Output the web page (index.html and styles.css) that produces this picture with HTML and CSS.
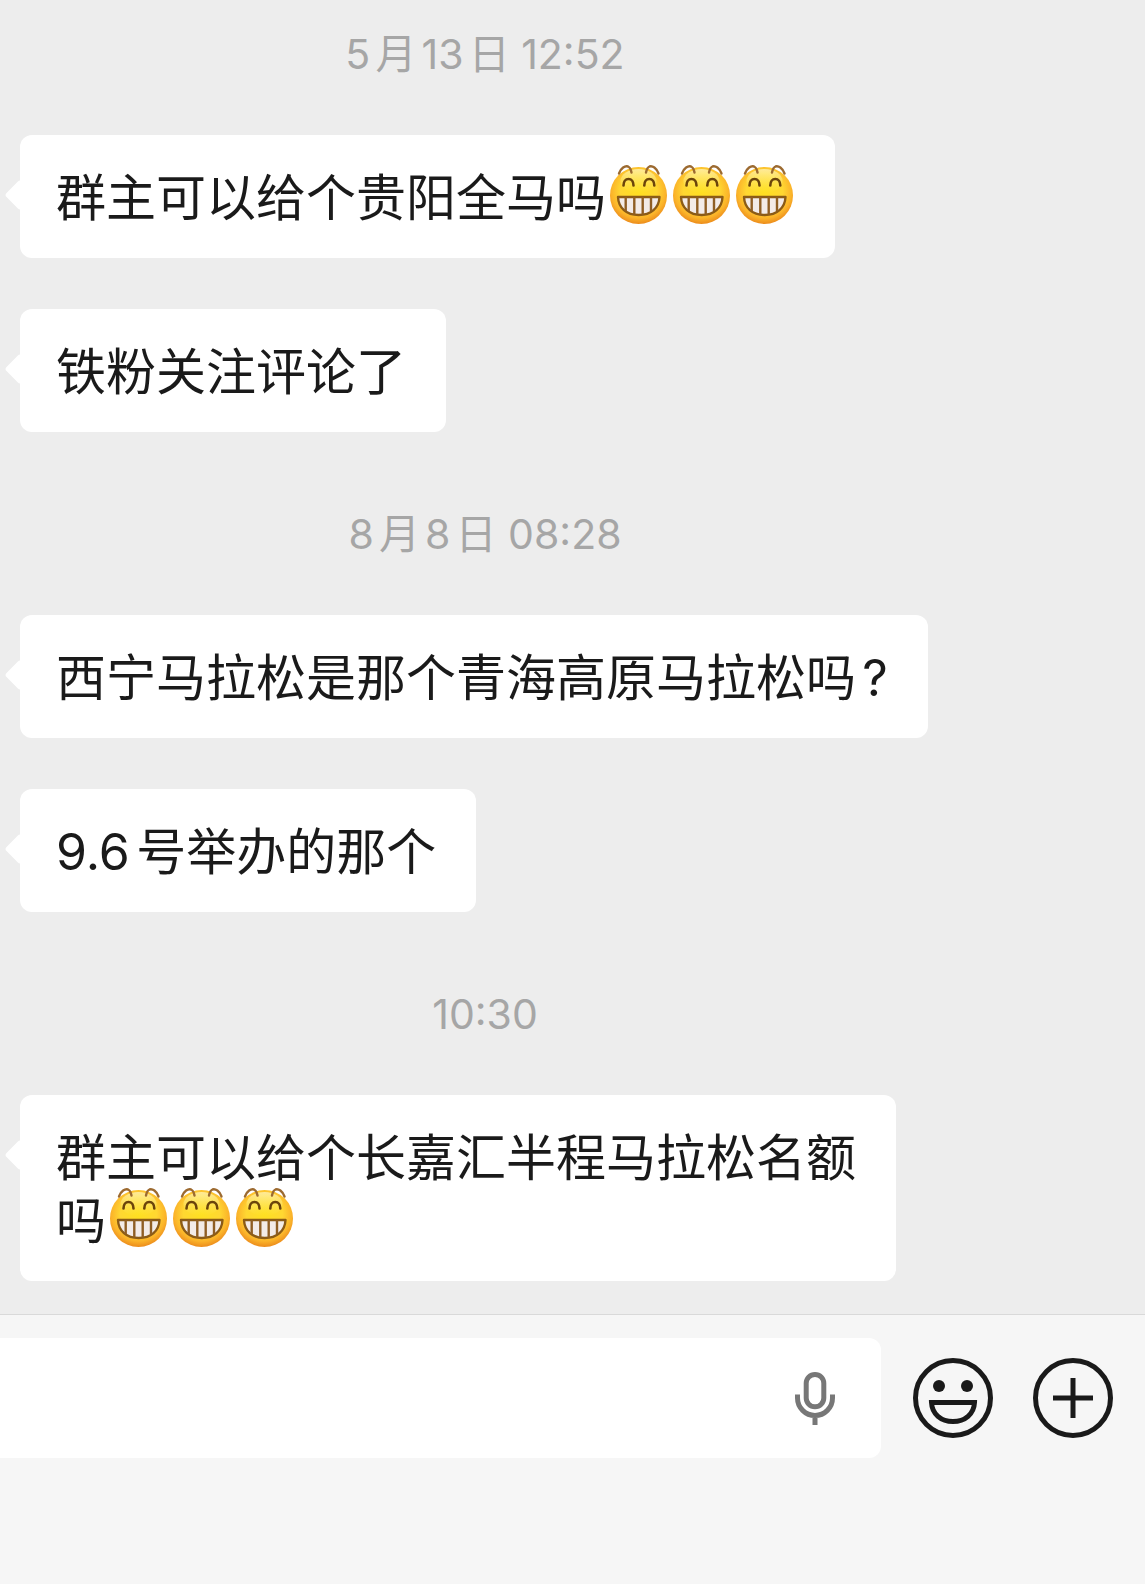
FILE: index.html
```html
<!DOCTYPE html>
<html lang="zh-CN">
<head>
  <meta charset="UTF-8" />
  <meta name="viewport" content="width=device-width, initial-scale=1.0"/>
  <title>聊天</title>
  <link rel="stylesheet" href="styles.css">
</head>
<body>

  <!-- Shared grin sticker -->
  <svg class="defs" aria-hidden="true">
    <defs>
      <radialGradient id="face" cx="50%" cy="42%" r="58%">
        <stop offset="0" stop-color="#ffe020" />
        <stop offset="0.55" stop-color="#ffd732" />
        <stop offset="0.82" stop-color="#fbb42a" />
        <stop offset="1" stop-color="#ec8c1c" />
      </radialGradient>
      <linearGradient id="shine" x1="0" y1="0" x2="0" y2="1">
        <stop offset="0" stop-color="#fff8c8" stop-opacity="0.7" />
        <stop offset="1" stop-color="#fff06a" stop-opacity="0" />
      </linearGradient>
      <symbol id="grin" viewBox="0 0 57 61">
        <circle cx="28.5" cy="31.5" r="28.5" fill="url(#face)" />
        <ellipse cx="28.5" cy="17" rx="18" ry="12" fill="url(#shine)" />
        <g fill="none" stroke-linecap="round">
          <path d="M9 9.5C11 4 15 1.5 18 2.5C20.5 3.5 21 6 21.5 8.5M36 8.5C36.5 6 37 3.5 39.500 2.5C42.500 1.5 46.500 4 48.500 9.5" stroke="#9c6a30" stroke-width="2.4" />
          <path d="M13.5 21.5C13.5 17.5 15.5 15 18.5 15S23.5 17.5 23.5 21.5M34.3 21.5C34.3 17.5 36.3 15 39.3 15S44.3 17.5 44.3 21.5" stroke="#6b440b" stroke-width="2.6" />
        </g>
        <path d="M8 33H49.5C49 44 41 51 28.7 51S8.5 44 8 33Z" fill="#f3ebe7" stroke="#8b5b16" stroke-width="2.4" stroke-linejoin="round" />
        <path d="M15.7 33V47M24.3 33V50.5M32.7 33V50.5M41 33V47" stroke="#8f5e24" stroke-width="2.4" />
      </symbol>
    </defs>
  </svg>

  <main class="chat">
    <time class="time">5月13日 12:52</time>

    <div class="message">
      <p class="bubble">群主可以给个贵阳全马吗<svg class="emoji" role="img" aria-label="呲牙"><use href="#grin" /></svg><svg class="emoji" role="img" aria-label="呲牙"><use href="#grin" /></svg><svg class="emoji" role="img" aria-label="呲牙"><use href="#grin" /></svg></p>
    </div>
    <div class="message">
      <p class="bubble">铁粉关注评论了</p>
    </div>

    <time class="time">8月8日 08:28</time>

    <div class="message">
      <p class="bubble">西宁马拉松是那个青海高原马拉松吗?</p>
    </div>
    <div class="message">
      <p class="bubble">9.6号举办的那个</p>
    </div>

    <time class="time">10:30</time>

    <div class="message">
      <p class="bubble">群主可以给个长嘉汇半程马拉松名额<br>吗<svg class="emoji" role="img" aria-label="呲牙"><use href="#grin" /></svg><svg class="emoji" role="img" aria-label="呲牙"><use href="#grin" /></svg><svg class="emoji" role="img" aria-label="呲牙"><use href="#grin" /></svg></p>
    </div>
  </main>

  <!-- Input bar -->
  <form class="composer">
    <div class="field">
      <input class="field-input" type="text" aria-label="输入消息" />
      <button class="icon-btn mic" type="button" aria-label="语音输入">
        <svg width="40" height="53" viewBox="0 0 40 53" fill="none" stroke="currentColor" stroke-width="5">
          <rect x="11.2" y="2.5" width="17.6" height="32.3" rx="8.8" />
          <path d="M2.5 22.5V26A17.5 17.5 0 0 0 37.5 26V22.5M20 43.5V53" />
        </svg>
      </button>
    </div>
    <div class="actions">
      <button class="icon-btn" type="button" aria-label="表情">
        <svg width="80" height="80" viewBox="0 0 80 80" fill="none" stroke="currentColor" stroke-width="5">
          <circle cx="40" cy="40" r="37.5" />
          <circle cx="26" cy="28" r="6" fill="currentColor" stroke="none" />
          <circle cx="54" cy="28" r="6" fill="currentColor" stroke="none" />
          <path d="M18.5 44.5H61.5C61 56 52 63.5 40 63.5S19 56 18.5 44.5Z" />
        </svg>
      </button>
      <button class="icon-btn" type="button" aria-label="更多">
        <svg width="80" height="80" viewBox="0 0 80 80" fill="none" stroke="currentColor" stroke-width="5">
          <circle cx="40" cy="40" r="37.5" />
          <path d="M20 40H60M40 20V60" />
        </svg>
      </button>
    </div>
  </form>

</body>
</html>
```

FILE: styles.css
```css
:root {
  --bg: #ededed;
  --bar: #f6f6f6;
  --surface: #ffffff;
  --text: #1a1a1a;
  --muted: #a6a6a6;
  --line: #d9d9d9;
}

* {
  margin: 0;
  padding: 0;
  box-sizing: border-box;
}

body {
  min-height: 100vh;
  display: flex;
  flex-direction: column;
  background: var(--bg);
  color: var(--text);
  font-family: Inter, "Noto Sans CJK SC", sans-serif;
  text-autospace: normal;
}

.defs {
  position: absolute;
  width: 0;
  height: 0;
}

.chat {
  display: flex;
  flex-direction: column;
  gap: 51px;
  padding: 3px 175px 33px 0;
}

.time {
  padding-top: 21px;
  text-align: center;
  font-size: 41px;
  line-height: 60px;
  color: var(--muted);
}

.message {
  display: flex;
  padding: 0 33px 0 20px;
}

.bubble {
  position: relative;
  padding: 32px 40px 28px 36px;
  border-radius: 12px;
  background: var(--surface);
  font-size: 50px;
  line-height: 63px;
}

/* little arrow on the left side */
.bubble::before {
  content: "";
  position: absolute;
  top: 49px;
  left: -11px;
  width: 22px;
  height: 22px;
  border-radius: 3px;
  background: var(--surface);
  transform: rotate(45deg);
}

.emoji {
  width: 57px;
  height: 61px;
  margin: -16px 2px 0 4px;
  vertical-align: -9px;
}

.composer {
  flex: 1;
  display: flex;
  align-items: flex-start;
  gap: 32px;
  padding: 23px 32px 24px 0;
  border-top: 1px solid var(--line);
  background: var(--bar);
}

.field {
  flex: 1;
  min-width: 0;
  height: 120px;
  display: flex;
  align-items: center;
  padding-right: 46px;
  border-radius: 0 12px 12px 0;
  background: var(--surface);
}

.field-input {
  flex: 1;
  min-width: 0;
  height: 100%;
  padding: 0 36px;
  border: none;
  outline: none;
  background: transparent;
  color: var(--text);
  font: inherit;
  font-size: 50px;
}

.actions {
  display: flex;
  align-items: center;
  gap: 40px;
  height: 120px;
}

.icon-btn {
  display: block;
  border: none;
  background: transparent;
  color: var(--text);
  cursor: pointer;
}

.icon-btn svg {
  display: block;
}

.mic {
  color: #777777;
}
```
